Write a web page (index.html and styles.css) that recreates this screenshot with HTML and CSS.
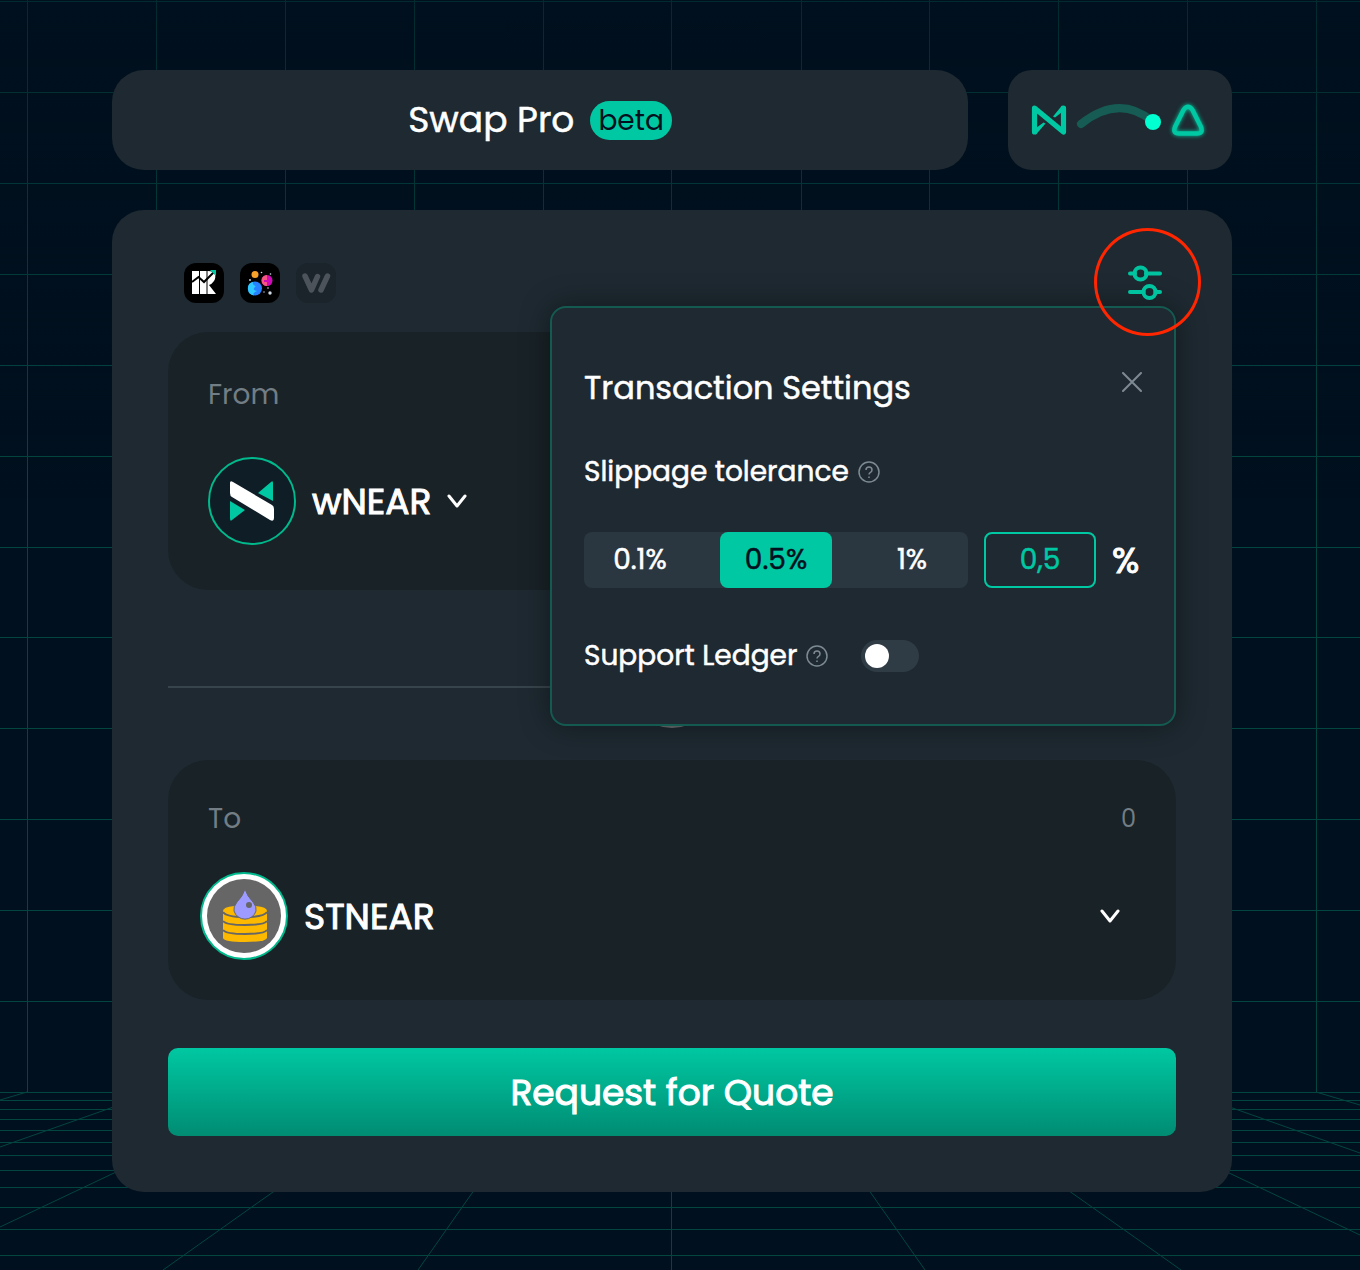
FILE: index.html
```html
<!DOCTYPE html>
<html lang="en">
<head>
<meta charset="utf-8">
<meta name="viewport" content="width=device-width, initial-scale=1">
<title>Swap Pro</title>
<link rel="stylesheet" href="styles.css">
</head>
<body>
<svg class="backdrop" viewBox="0 0 1360 1270" preserveAspectRatio="xMidYMin slice" aria-hidden="true">
  <defs>
    <linearGradient id="fade" x1="0" y1="0" x2="0" y2="1">
      <stop offset="0" stop-color="#00101e" stop-opacity=".5"/>
      <stop offset="1" stop-color="#00101e" stop-opacity="0"/>
    </linearGradient>
  </defs>
  <g class="grid-lines">
    <path d="M27.5 0V1092M156.500 0V1092M285.500 0V1092M414.500 0V1092M543.500 0V1092M671.500 0V1270M801.500 0V1092M929.500 0V1092M1058.500 0V1092M1187.500 0V1092M1316.500 0V1092"/>
    <path d="M0 1.500H1360M0 92.500H1360M0 183.500H1360M0 274.500H1360M0 365.500H1360M0 456.500H1360M0 547.500H1360M0 637.500H1360M0 728.500H1360M0 819.500H1360M0 910.500H1360M0 1001.500H1360"/>
    <path d="M0 1092.500H1360M0 1100.500H1360M0 1109.500H1360M0 1119.500H1360M0 1130.500H1360M0 1142.500H1360M0 1155.500H1360M0 1170.500H1360M0 1187.500H1360M0 1207.500H1360M0 1229.500H1360M0 1255.500H1360"/>
    <path d="M27 1092L0 1100M156 1092L0 1147M285 1092L0 1227M414 1092L163 1270M543 1092L418 1270M800 1092L925 1270M929 1092L1181 1270M1058 1092L1360 1235M1187 1092L1360 1153M1316 1092L1360 1105"/>
  </g>
  <rect width="1360" height="500" fill="url(#fade)"/>
</svg>

<main class="page">
  <header class="header">
    <div class="title-card">
      <h1 class="title">Swap Pro</h1>
      <span class="badge">beta</span>
    </div>
    <button class="route-card" type="button" aria-label="Switch network">
      <svg class="route-icon" viewBox="0 0 184 48" aria-hidden="true">
        <path d="M6.500 36V12L35.500 36V12" fill="none" stroke="#00c8a2" stroke-width="5.200" stroke-linejoin="round" stroke-linecap="round"/>
        <path d="M34 9.500L25 20.500L27 21.500L38 13zM8 38.500L17.500 27.500L15.500 26.500L4 35z" fill="#00c8a2"/>
        <path d="M53 28Q91 -2 124 25" fill="none" stroke="#165c54" stroke-width="8" stroke-linecap="round"/>
        <circle cx="125" cy="26" r="8" fill="#00ffd1"/>
        <path class="glow" d="M155.500 14Q160 7.500 164.500 14L173 31Q175.500 37.500 169 37.500H151Q144.500 37.500 147 31Z" fill="none" stroke="#00c8a2" stroke-width="4.500"/>
      </svg>
    </button>
  </header>

  <section class="swap-card">
    <div class="toolbar">
      <ul class="sources">
        <li class="source">
          <svg viewBox="0 0 40 40" role="img" aria-label="Ref">
            <path d="M8 8H24C31 8 33 13 30 18Q28 21 25 22L32 31H8Z" fill="#fff"/>
            <path d="M15.500 8V31M23 8V31" stroke="#000" stroke-width="1"/>
            <path d="M8 19L14.500 14L20 19L30 9" fill="none" stroke="#000" stroke-width="2"/>
            <path d="M26 7H32V13Z" fill="#00c8a2"/>
          </svg>
        </li>
        <li class="source">
          <svg viewBox="0 0 40 40" role="img" aria-label="Jumbo">
            <circle cx="15" cy="11.500" r="3.500" fill="#f7a22b"/>
            <circle cx="27" cy="17.500" r="5.500" fill="#cf0ab8"/>
            <path d="M27 12A5.500 5.500 0 0 0 27 23V19H24V17H27Z" fill="#f5567f"/>
            <circle cx="15" cy="25.500" r="7" fill="#2680ff"/>
            <path d="M13 18.800A7 7 0 0 0 14 32.500Q12 30 17 28Q11 27 16 23Q12 22 13 18.800" fill="#2fc8ff"/>
            <g fill="#cfdbe6"><circle cx="21.500" cy="9.500" r=".8"/><circle cx="30.500" cy="11" r=".8"/><circle cx="10" cy="17" r=".9"/><circle cx="28" cy="25" r=".8"/><circle cx="24" cy="29" r=".7"/><circle cx="30" cy="30" r="1.700"/></g>
          </svg>
        </li>
        <li class="source source-off">
          <svg viewBox="0 0 40 40" role="img" aria-label="Wannaswap">
            <path d="M9 13L15.500 27L21.500 13.500M25 27L31.500 13" fill="none" stroke="#4c535b" stroke-width="5.500" stroke-linecap="round" stroke-linejoin="round"/>
          </svg>
        </li>
      </ul>
      <div class="settings">
        <button class="icon-button" type="button" aria-label="Settings">
          <svg class="sliders" viewBox="0 0 36 36" aria-hidden="true">
            <path d="M2 8.500H7M18 8.500H32M2 27H15.500M27.500 27H32" stroke-linecap="round"/>
            <circle cx="12.500" cy="8.500" r="6"/>
            <circle cx="21.500" cy="27" r="6"/>
          </svg>
        </button>
        <span class="ring"></span>
      </div>

      <div class="popover" role="dialog" aria-labelledby="settings-title">
        <div class="popover-head">
          <h2 class="popover-title" id="settings-title">Transaction Settings</h2>
          <button class="close" type="button" aria-label="Close">
            <svg viewBox="0 0 20 20" aria-hidden="true"><path d="M1 1L19 19M19 1L1 19"/></svg>
          </button>
        </div>
        <div class="setting-label">
          <label for="slippage">Slippage tolerance</label>
          <svg class="help" viewBox="0 0 22 22" aria-hidden="true"><circle cx="11" cy="11" r="10"/><path d="M8 9Q8 6 11 6T14 9Q14 10.500 12.500 11.300T11 13.500M11 15.500V17"/></svg>
        </div>
        <div class="slippage">
          <div class="presets">
            <button class="preset" type="button">0.1%</button>
            <button class="preset preset-on" type="button">0.5%</button>
            <button class="preset" type="button">1%</button>
          </div>
          <input class="slippage-input" id="slippage" type="text" inputmode="decimal" value="0,5">
          <span class="percent">%</span>
        </div>
        <div class="setting-label">
          <label for="ledger">Support Ledger</label>
          <svg class="help" viewBox="0 0 22 22" aria-hidden="true"><circle cx="11" cy="11" r="10"/><path d="M8 9Q8 6 11 6T14 9Q14 10.500 12.500 11.300T11 13.500M11 15.500V17"/></svg>
          <input class="toggle" id="ledger" type="checkbox">
        </div>
      </div>
    </div>

    <div class="asset asset-from">
      <div class="asset-head"><span>From</span></div>
      <button class="token" type="button">
        <svg class="coin" viewBox="0 0 88 88" aria-hidden="true">
          <circle cx="44" cy="44" r="43" fill="#0f1d27" stroke="#00b98c" stroke-width="2"/>
          <path d="M50 36L63 25Q65 23 65 26V44ZM22 44L37 53L24 63Q22 65 22 61Z" fill="#00c8a2"/>
          <path d="M22 26Q22 23 25 25L64 48Q66 49 66 52V61Q66 65 62 63L24 40Q22 39 22 36Z" fill="#fff"/>
        </svg>
        <span>wNEAR</span>
        <svg class="chevron" viewBox="0 0 20 14" aria-hidden="true"><path d="M2 2L10 12L18 2"/></svg>
      </button>
    </div>

    <div class="divider">
      <button class="flip" type="button" aria-label="Swap direction">
        <svg viewBox="0 0 32 32" aria-hidden="true"><path d="M10 4V28L4 22M22 28V4L28 10"/></svg>
      </button>
    </div>

    <div class="asset asset-to">
      <div class="asset-head"><span>To</span><span class="amount">0</span></div>
      <button class="token" type="button">
        <svg class="coin" viewBox="0 0 88 88" aria-hidden="true">
          <circle cx="44" cy="44" r="43" fill="#fff" stroke="#00b98c" stroke-width="2"/>
          <circle cx="44" cy="44" r="37" fill="#666"/>
          <path d="M23 39Q23 35 34 34H56Q67 35 67 39V66Q66 70 45 70T23 66Z" fill="#fdb900"/>
          <path d="M23 40Q26 45 45 45T67 40M23 49Q26 53 45 53T67 49M23 58Q26 62 45 62T67 58" fill="none" stroke="#666" stroke-width="2"/>
          <path d="M45 17Q47 24 53 30Q57 35 56 39A11.500 11.500 0 0 1 34 39Q33 35 37 30Q43 24 45 17Z" fill="#9d9bff" stroke="#666" stroke-width="1"/>
          <circle cx="49" cy="33" r="3" fill="#666"/>
        </svg>
        <span>STNEAR</span>
        <svg class="chevron" viewBox="0 0 20 14" aria-hidden="true"><path d="M2 2L10 12L18 2"/></svg>
      </button>
    </div>

    <button class="submit" type="button">Request for Quote</button>
  </section>
</main>
</body>
</html>
```
FILE: styles.css
```css
* {
  box-sizing: border-box;
}

body {
  margin: 0;
  min-height: 100vh;
  background: #00101e;
  color: #fff;
  font-family: Poppins, Inter, "Noto Sans", sans-serif;
}

button,
input {
  margin: 0;
  padding: 0;
  border: 0;
  background: none;
  color: inherit;
  font: inherit;
}

button {
  cursor: pointer;
}

svg {
  display: block;
}

.backdrop {
  position: fixed;
  inset: 0;
  width: 100%;
  height: 100%;
  z-index: -1;
}

.grid-lines {
  fill: none;
  stroke: #034640;
}

.page {
  display: flex;
  flex-direction: column;
  gap: 40px;
  padding: 70px 128px 78px 112px;
}

.header {
  display: flex;
  gap: 40px;
}

.title-card,
.route-card {
  display: flex;
  align-items: center;
  justify-content: center;
  min-height: 100px;
  background: #1e2931;
}

.title-card {
  flex: 1;
  gap: 16px;
  border-radius: 32px;
}

.title {
  margin: 0;
  font-size: 36px;
  font-weight: 400;
  line-height: 48px;
  -webkit-text-stroke: 0.5px;
}

.badge {
  padding: 0 8px;
  border-radius: 20px;
  background: #00c8a2;
  color: #00101e;
  font-size: 28px;
  line-height: 39px;
}

.route-card {
  padding: 0 20px;
  border-radius: 24px;
}

.route-icon {
  width: 184px;
  height: 48px;
}

.glow {
  filter: drop-shadow(0 0 2px #00c8a2);
}

.swap-card {
  display: flex;
  flex-direction: column;
  padding: 53px 56px 56px;
  border-radius: 32px;
  background: #1e2931;
}

.toolbar {
  position: relative;
  display: flex;
  align-items: center;
  justify-content: space-between;
  margin-bottom: 29px;
  padding: 0 12px 0 16px;
}

.sources {
  display: flex;
  gap: 16px;
  margin: 0;
  padding: 0;
  list-style: none;
}

.source {
  width: 40px;
  height: 40px;
  border-radius: 12px;
  background: #000;
}

.source-off {
  background: #1a242a;
}

.settings {
  position: relative;
  z-index: 3;
}

.icon-button,
.sliders {
  display: block;
  width: 36px;
  height: 36px;
}

.sliders {
  fill: none;
  stroke: #00c3a0;
  stroke-width: 4;
}

.ring {
  position: absolute;
  top: -37px;
  left: -34px;
  width: 107px;
  height: 108px;
  border: 3px solid #ff2600;
  border-radius: 50%;
  pointer-events: none;
}

.popover {
  position: absolute;
  z-index: 2;
  top: 43px;
  right: 0;
  width: 626px;
  padding: 56px 32px 44px;
  border: 2px solid #145a50;
  border-radius: 16px;
  background: #1e2931;
  box-shadow: 0 0 30px rgba(0, 0, 0, 0.4);
}

.popover-head {
  display: flex;
  justify-content: space-between;
  margin-bottom: 36px;
}

.popover-title {
  margin: 0;
  font-size: 32px;
  font-weight: 400;
  line-height: 48px;
  -webkit-text-stroke: 0.5px;
}

.close {
  width: 20px;
  height: 36px;
}

.close svg {
  width: 20px;
  height: 20px;
  stroke: #7e8a93;
  stroke-width: 2;
  stroke-linecap: round;
}

.setting-label {
  display: flex;
  align-items: center;
  gap: 9px;
  font-size: 28px;
  line-height: 48px;
  -webkit-text-stroke: 0.5px;
}

.help {
  width: 22px;
  height: 22px;
  fill: none;
  stroke: #7e8a93;
  stroke-width: 1.5;
}

.slippage {
  display: flex;
  align-items: center;
  gap: 16px;
  margin: 36px 0 44px;
}

.presets {
  display: flex;
  flex: 1;
  justify-content: space-between;
  border-radius: 8px;
  background: #2b3740;
}

.preset,
.slippage-input {
  width: 112px;
  height: 56px;
  border-radius: 8px;
  font-size: 28px;
  text-align: center;
  -webkit-text-stroke: 0.5px;
}

.preset-on {
  background: #00c8a2;
  color: #00101e;
}

.slippage-input {
  border: 2px solid #00c8a2;
  color: #00c8a2;
}

.percent {
  width: 30px;
  font-size: 36px;
  -webkit-text-stroke: 1px;
}

.toggle {
  display: flex;
  align-items: center;
  width: 58px;
  height: 32px;
  margin-left: 24px;
  padding: 4px;
  border-radius: 16px;
  background: #303c45;
  appearance: none;
}

.toggle::before {
  content: "";
  width: 24px;
  height: 24px;
  border-radius: 50%;
  background: #fff;
}

.toggle:checked {
  justify-content: flex-end;
  background: #00c8a2;
}

.asset {
  display: flex;
  flex-direction: column;
  border-radius: 40px;
  background: #192227;
}

.asset-from {
  gap: 37px;
  padding: 40px 40px 45px;
}

.asset-to {
  gap: 28px;
  padding: 36px 40px 40px 32px;
}

.asset-head {
  display: flex;
  justify-content: space-between;
  min-height: 48px;
  color: #727d84;
  font-size: 28px;
  line-height: 46px;
}

.asset-to .asset-head {
  padding-left: 8px;
}

.amount {
  font-size: 24px;
}

.token {
  display: flex;
  align-items: center;
  gap: 16px;
  font-size: 36px;
  -webkit-text-stroke: 1px;
}

.asset-to .token {
  padding-right: 16px;
}

.asset-to .chevron {
  margin-left: auto;
}

.coin {
  width: 88px;
  height: 88px;
}

.chevron {
  width: 20px;
  height: 14px;
  fill: none;
  stroke: #fff;
  stroke-width: 3;
  stroke-linecap: round;
  stroke-linejoin: round;
}

.divider {
  display: flex;
  align-items: center;
  height: 170px;
  padding-top: 24px;
}

.divider::before,
.divider::after {
  content: "";
  flex: 1;
  height: 2px;
  background: #38444c;
}

.flip {
  display: grid;
  place-items: center;
  width: 82px;
  height: 82px;
  border: 2px solid #6b6f73;
  border-radius: 50%;
}

.flip svg {
  width: 32px;
  height: 32px;
  fill: none;
  stroke: #fff;
  stroke-width: 3;
}

.submit {
  height: 88px;
  margin-top: 48px;
  border-radius: 10px;
  background: linear-gradient(#00c8a2, #008c73);
  font-size: 36px;
  -webkit-text-stroke: 1px;
}
```
